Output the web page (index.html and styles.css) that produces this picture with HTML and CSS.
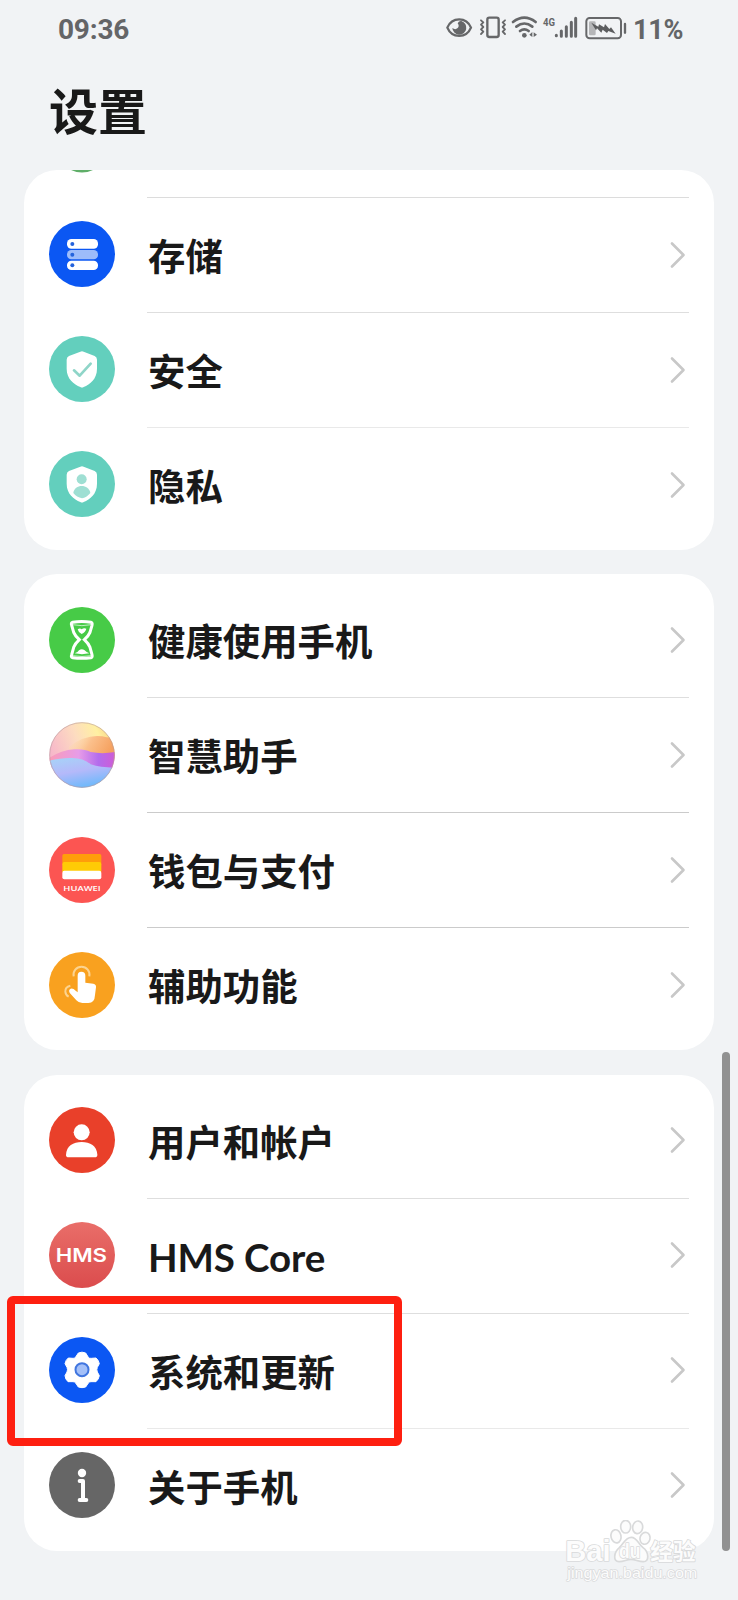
FILE: index.html
```html
<!DOCTYPE html>
<html lang="zh-CN">
<head>
<meta charset="utf-8">
<title>设置</title>
<link rel="stylesheet" href="styles.css">
</head>
<body>
<svg class="defs" aria-hidden="true">
  <symbol id="chevron" viewBox="0 0 18 30"><path d="M3 3.5 14.5 15 3 26.5" fill="none" stroke="#c8c8c8" stroke-width="2.6" stroke-linecap="round" stroke-linejoin="round"/></symbol>
  <symbol id="shield" viewBox="0 0 198 198"><path d="M94 47Q99 44 104 47L137 60Q144 63 144 71V98C144 129 123 145 104 153Q99 156 94 153C75 145 53 129 53 98V71Q53 63 60 60Z" fill="#fff"/></symbol>
</svg>
<div class="screen">
  <header class="status">
    <span class="time">09:36</span>
    <div class="status-right">
      <svg class="status-icons" viewBox="0 0 600 180">
        <g fill="none" stroke="#666769" stroke-linecap="round" stroke-linejoin="round">
          <path d="M52 83C66 50 109 50 123 83C109 116 66 116 52 83Z" stroke-width="7"/>
          <rect x="172" y="53" width="34" height="58" rx="6" stroke-width="7"/>
          <path d="M153 61 160 67 153 74 160 81 153 88 160 95 153 102M225 61 218 67 225 74 218 81 225 88 218 95 225 102" stroke-width="5.5"/>
          <path d="M249 66Q283 40 317 66M259 80Q283 61 307 80M270 93Q283 83 296 93" stroke-width="8"/>
          <rect x="469" y="54" width="104" height="61" rx="10" stroke-width="6"/>
          <path d="M379 106V107M394 93V109M409 80V109M424 67V109M437 55V109" stroke-width="9"/>
          <path d="M585 72V98" stroke-width="7"/>
        </g>
        <path d="M94 63A21 21 0 1 1 67 84Q76 91 83 84 89 78 83 70 87 62 94 63Z" fill="#666769"/>
        <circle cx="283" cy="106" r="7" fill="#666769"/>
        <path d="M307 96V111L298 104ZM311 97V111L321 104Z" fill="#666769"/>
        <rect x="477" y="64" width="20" height="42" rx="4" fill="#b5b6b8"/>
        <path d="M484 68 505 80 507 73 522 82 525 72 538 87 543 82 557 101 535 93 531 99 518 89 514 98 501 85 498 91Z" fill="#5c5d5f"/>
        <text class="net" x="339" y="79" textLength="36" lengthAdjust="spacingAndGlyphs">4G</text>
      </svg>
      <span class="battery">11%</span>
    </div>
  </header>
  <h1 class="title">设置</h1>

  <main class="list">
    <section class="card card-first">
      <div class="row-tail"><svg class="sliver" viewBox="0 0 22 3"><path d="M0 0H22Q11 5 0 0Z" fill="#5fae68"/></svg></div>
      <div class="row">
        <svg class="icon" viewBox="0 0 198 198"><circle cx="99" cy="99" r="99" fill="#0b57f3"/><g fill="#fff"><rect x="54" y="54" width="93" height="29" rx="13"/><rect x="54" y="87" width="93" height="28" rx="13" fill="#9dbcfa"/><rect x="54" y="119" width="93" height="28" rx="13"/></g><g fill="#2463dc"><circle cx="70" cy="69" r="6"/><circle cx="70" cy="101" r="6"/><circle cx="70" cy="133" r="6"/></g></svg>
        <div class="cell line"><span class="label">存储</span><svg class="chev"><use href="#chevron"/></svg></div>
      </div>
      <div class="row">
        <svg class="icon" viewBox="0 0 198 198"><circle cx="99" cy="99" r="99" fill="#63cfbd"/><use href="#shield"/><path d="M75 103 92 119 125 83" fill="none" stroke="#8fd5c8" stroke-width="8" stroke-linecap="round" stroke-linejoin="round"/></svg>
        <div class="cell line light"><span class="label">安全</span><svg class="chev"><use href="#chevron"/></svg></div>
      </div>
      <div class="row">
        <svg class="icon" viewBox="0 0 198 198"><circle cx="99" cy="99" r="99" fill="#63cfbd"/><use href="#shield"/><g fill="#9fdfd3"><circle cx="98" cy="85" r="15"/><path d="M73 126C76 98 120 98 124 126Q112 140 99 142 83 139 73 126Z"/></g></svg>
        <div class="cell"><span class="label">隐私</span><svg class="chev"><use href="#chevron"/></svg></div>
      </div>
    </section>

    <section class="card">
      <div class="row">
        <svg class="icon" viewBox="0 0 198 198"><circle cx="99" cy="99" r="99" fill="#47cb47"/><path d="M71 46Q98 41 126 46 131 47 129 55L123 76Q119 86 106 98 119 110 123 121L129 143Q131 151 126 152 98 156 71 152 65 151 68 143L74 121Q78 110 91 98 78 86 74 76L68 55Q65 47 71 46Z" fill="none" stroke="#fff" stroke-width="9"/><path d="M70 53Q99 59 127 53M70 146Q99 151 127 146" fill="none" stroke="#fff" stroke-width="2"/><path d="M86 67Q93 62 98 67 104 62 112 65 110 75 98 81 88 77 86 67ZM77 139Q87 136 90 130 98 124 107 130 112 136 121 139 99 144 77 139Z" fill="#fff"/></svg>
        <div class="cell line"><span class="label">健康使用手机</span><svg class="chev"><use href="#chevron"/></svg></div>
      </div>
      <div class="row">
        <svg class="icon" viewBox="0 0 198 198">
          <defs>
            <linearGradient id="sky" x1="0" y1=".5" x2="1" y2=".1"><stop offset="0" stop-color="#f6b4cb"/><stop offset=".45" stop-color="#fddcc0"/><stop offset=".75" stop-color="#fff0a2"/><stop offset="1" stop-color="#f6ca78"/></linearGradient>
            <linearGradient id="sun" x1="0" y1="0" x2="1" y2=".3"><stop offset="0" stop-color="#fde5c0" stop-opacity=".1"/><stop offset=".5" stop-color="#fbc08c"/><stop offset="1" stop-color="#f5a15f"/></linearGradient>
            <linearGradient id="hill" x1="0" y1="0" x2="1" y2="0"><stop offset="0" stop-color="#f99cb7"/><stop offset=".45" stop-color="#e79ce8"/><stop offset=".75" stop-color="#b36cec"/><stop offset="1" stop-color="#cf5cd6"/></linearGradient>
            <linearGradient id="sea" x1=".2" y1="0" x2=".6" y2="1"><stop offset="0" stop-color="#a8d1f8"/><stop offset=".45" stop-color="#b5b9fa"/><stop offset="1" stop-color="#67b9fb"/></linearGradient>
            <clipPath id="ball"><circle cx="99" cy="99" r="98"/></clipPath>
          </defs>
          <g clip-path="url(#ball)"><rect width="198" height="198" fill="url(#sky)"/><path d="M60 74Q110 36 160 43 180 50 198 42V110H60Z" fill="url(#sun)"/><path d="M0 108Q38 84 76 82 106 80 125 90 160 97 198 90V140H0Z" fill="url(#hill)"/><path d="M0 116Q35 108 62 108 102 106 125 127 155 137 198 137V198H0Z" fill="url(#sea)"/></g><circle cx="99" cy="99" r="97" fill="none" stroke="#b69b9e" stroke-opacity=".7" stroke-width="2.5"/></svg>
        <div class="cell line dark"><span class="label">智慧助手</span><svg class="chev"><use href="#chevron"/></svg></div>
      </div>
      <div class="row">
        <svg class="icon" viewBox="0 0 198 198"><circle cx="99" cy="99" r="99" fill="#fc5552"/><path d="M45 51H152Q157 51 157 56V80H40V56Q40 51 45 51Z" fill="#ff9d0a"/><path d="M40 82Q40 75 46 75H151Q157 75 157 82V106H40Z" fill="#ffcb05"/><path d="M40 108Q40 101 46 101H151Q157 101 157 108V121Q157 127 151 127H46Q40 127 40 121Z" fill="#fff"/><text class="brand" x="43" y="162" textLength="112" lengthAdjust="spacingAndGlyphs">HUAWEI</text></svg>
        <div class="cell line dark"><span class="label">钱包与支付</span><svg class="chev"><use href="#chevron"/></svg></div>
      </div>
      <div class="row">
        <svg class="icon" viewBox="0 0 198 198"><circle cx="99" cy="99" r="99" fill="#f9a11f"/><path d="M74 73A24 24 0 1 1 121 73M64 101Q48 105 49 119 50 130 59 134" fill="none" stroke="#fcd38f" stroke-width="6"/><path d="M86 71Q86 59 97 59 109 59 109 71V92L133 95Q142 97 141 106L138 129Q137 153 118 153H100Q89 153 82 145L63 124Q57 114 65 110 72 108 80 116L86 121Z" fill="#fff"/></svg>
        <div class="cell"><span class="label">辅助功能</span><svg class="chev"><use href="#chevron"/></svg></div>
      </div>
    </section>

    <section class="card">
      <div class="row">
        <svg class="icon" viewBox="0 0 198 198"><circle cx="99" cy="99" r="99" fill="#e9402a"/><circle cx="98" cy="76" r="24" fill="#fff"/><path d="M51 143C52 117 73 105 98 105S144 117 145 143Q145 151 137 151H59Q51 151 51 143Z" fill="#fff"/></svg>
        <div class="cell line"><span class="label">用户和帐户</span><svg class="chev"><use href="#chevron"/></svg></div>
      </div>
      <div class="row">
        <svg class="icon" viewBox="0 0 198 198"><defs><linearGradient id="hms" x1="0" y1="0" x2="0" y2="1"><stop offset="0" stop-color="#e96e69"/><stop offset="1" stop-color="#db4c4d"/></linearGradient></defs><circle cx="99" cy="99" r="99" fill="url(#hms)"/><text class="hms" x="20" y="121" textLength="154" lengthAdjust="spacingAndGlyphs">HMS</text></svg>
        <div class="cell line"><span class="label latin">HMS Core</span><svg class="chev"><use href="#chevron"/></svg></div>
      </div>
      <div class="row">
        <svg class="icon" viewBox="0 0 198 198"><circle cx="99" cy="99" r="99" fill="#0b57f3"/><path d="M88 48Q99 43 110 48L118 61Q121 65 127 64L141 63Q149 69 151 80L145 91Q142 98 145 105L151 116Q149 127 141 134L126 134Q121 134 118 138L110 150Q99 154 88 150L80 138Q77 134 72 134L57 134Q49 127 48 116L54 105Q57 98 54 91L48 80Q50 69 58 63L72 64Q77 65 80 60Z" fill="#fff" stroke="#fff" stroke-width="3" stroke-linejoin="round"/><circle cx="99" cy="98" r="19.500" fill="#a4c0f8" stroke="#4176df" stroke-width="6"/></svg>
        <div class="cell line light"><span class="label">系统和更新</span><svg class="chev"><use href="#chevron"/></svg></div>
      </div>
      <div class="row">
        <svg class="icon" viewBox="0 0 198 198"><circle cx="99" cy="99" r="99" fill="#666"/><circle cx="99" cy="63" r="12.500" fill="#fff"/><path d="M92 87H102V144M92 144H112" fill="none" stroke="#fff" stroke-width="12" stroke-linecap="round" stroke-linejoin="round"/></svg>
        <div class="cell"><span class="label">关于手机</span><svg class="chev"><use href="#chevron"/></svg></div>
      </div>
    </section>
  </main>

  <div class="scrollbar"></div>
  <div class="highlight"></div>
  <svg class="watermark" viewBox="0 0 420 200">
    <g class="mark" fill="#fcfcfc" stroke="#d9dadb" stroke-width="5">
      <text class="wm-lat" x="16" y="123" textLength="136" lengthAdjust="spacingAndGlyphs">Bai</text>
      <path d="M214 52C196 52 192 70 178 83 162 96 157 126 178 125 192 125 200 118 213 118S235 125 249 125C270 126 266 95 249 83 234 72 232 52 214 52Z"/>
      <ellipse cx="168" cy="49" rx="15" ry="20" transform="rotate(-12 168 49)"/><ellipse cx="197" cy="20" rx="15" ry="19"/><ellipse cx="233" cy="22" rx="15" ry="19" transform="rotate(8 233 22)"/><ellipse cx="255" cy="55" rx="15" ry="18" transform="rotate(15 255 55)"/>
      <text class="wm-du" x="177" y="113" textLength="64" lengthAdjust="spacingAndGlyphs">du</text>
      <text class="wm-cjk" x="271" y="119" textLength="136" lengthAdjust="spacingAndGlyphs">经验</text>
      <text class="wm-url" x="22" y="174" textLength="390" lengthAdjust="spacingAndGlyphs">jingyan.baidu.com</text>
    </g>
  </svg>
</div>
</body>
</html>
```
FILE: styles.css
```css
* { box-sizing: border-box; }
body { margin: 0; background: #f1f3f5; color: #191919; font-family: "Noto Sans CJK SC", sans-serif; }
.defs { position: absolute; width: 0; height: 0; }
.screen { position: relative; width: 738px; height: 1600px; overflow: hidden; }
.status { display: flex; justify-content: space-between; height: 60px; padding: 0 55px 0 58px; color: #646567; font: 700 28px/60px Roboto, sans-serif; }
.status-right { display: flex; }
.status-icons { width: 200px; height: 60px; }
.time { letter-spacing: -0.2px; }
.battery { width: 53px; padding-left: 3px; font-size: 27px; letter-spacing: -0.3px; white-space: nowrap; }
.net { font: 700 31px Roboto, sans-serif; fill: #666769; }
.title { height: 110px; margin: 0; padding-left: 49px; font-size: 49px; font-weight: 700; line-height: 98px; }
.list { display: flex; flex-direction: column; gap: 24px; padding: 0 24px; }
.card { padding: 9px 0 7px; border-radius: 33px; background: #fff; }
.card-first { padding-top: 0; }
.card:last-child { margin-top: 0.5px; }
.row-tail { display: flex; height: 28px; margin: 0 25px 0 123px; border-bottom: 1px solid #dcdcdc; }
.sliver { width: 22px; height: 3px; margin-left: -76px; }
.row { display: flex; align-items: center; height: 115px; padding: 0 25px; }
.icon { flex: none; width: 66px; height: 66px; margin: 0 32px 2px 0; }
.card-first .icon { margin-bottom: 3px; }
.cell { display: flex; flex: 1; align-items: center; justify-content: space-between; height: 115px; border-bottom: 1px solid transparent; }
.line { border-color: #dedede; }
.light { border-color: #e9e9e9; }
.dark { border-color: #cbcbcb; }
.label { padding: 0 0 0 1px; font-size: 37.4px; font-weight: 700; line-height: 54px; white-space: nowrap; }
.latin { padding-top: 2px; font-family: Lato, sans-serif; font-size: 38.5px; font-weight: 700; letter-spacing: -0.1px; }
.chev { width: 18px; height: 30px; margin: 0 2px 1px 0; }
.brand { font: 600 23.5px "Open Sans", sans-serif; fill: #fff; }
.hms { font: 600 57px Inter, sans-serif; fill: #fff; }
.scrollbar { position: absolute; left: 722px; top: 1052px; width: 8px; height: 499px; border-radius: 4px; background: #919191; }
.highlight { position: absolute; left: 7px; top: 1296px; width: 395px; height: 150px; border: 8px solid #fe1f10; border-radius: 6px; }
.watermark { position: absolute; left: 560px; top: 1520px; width: 140px; height: 66.67px; }
.mark text { paint-order: stroke; stroke-linejoin: round; }
.wm-lat { font: 700 86px "Liberation Sans", sans-serif; }
.wm-du { font: 700 58px "Liberation Sans", sans-serif; }
.wm-cjk { font: 700 68px "Noto Sans CJK SC", sans-serif; }
.wm-url { font: 400 42px "Liberation Sans", sans-serif; stroke-width: 4px; }
```
